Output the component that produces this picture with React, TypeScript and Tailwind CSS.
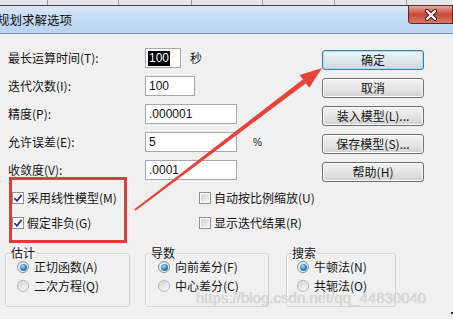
import React from "react";

const K = ({ c }: { c: string }) => <>({c})</>;

function Input({ w, children, selected }: { w: string; children: React.ReactNode; selected?: boolean }) {
  return (
    <div
      className={`${w} flex h-[20px] items-center border border-[#a5a8ae] bg-white pl-[2px] font-['Liberation_Sans',sans-serif] text-[12px] text-[#111]`}
    >
      {selected ? <span className="bg-black px-[1px] leading-[15px] text-white">{children}</span> : <span className="pl-[1px]">{children}</span>}
    </div>
  );
}

function Btn({ children, def }: { children: React.ReactNode; def?: boolean }) {
  return (
    <div
      className={
        def
          ? "flex h-[20px] w-[102px] items-center justify-center rounded-[3px] border border-[#3d7bad] bg-linear-to-b from-[#eef6fb] via-[#e0e8ee] to-[#cfd8de] text-[12px] shadow-[inset_0_0_0_1px_#a6dcf3]"
          : "flex h-[20px] w-[102px] items-center justify-center rounded-[3px] border border-[#707070] bg-linear-to-b from-[#f3f3f3] via-[#e6e6e6] to-[#d2d2d2] text-[12px] shadow-[inset_0_0_0_1px_#fbfbfb]"
      }
    >
      {children}
    </div>
  );
}

function Check({ checked, children }: { checked?: boolean; children: React.ReactNode }) {
  return (
    <div className="flex h-[16px] items-center">
      <span className="flex h-[12px] w-[12px] items-center justify-center border border-[#8e8f8f] bg-white">
        {checked ? (
          <svg width="10" height="10" viewBox="0 0 10 10">
            <path d="M1.5 5.2 L4 7.8 L8.6 1.8" fill="none" stroke="#2b3f86" strokeWidth="1.9" />
          </svg>
        ) : (
          <span className="h-[8px] w-[8px] bg-linear-to-br from-[#cfcfcf] to-[#f4f4f4]" />
        )}
      </span>
      <span className="ml-[3px] text-[12px] leading-[14px]">{children}</span>
    </div>
  );
}

function Radio({ on, children }: { on?: boolean; children: React.ReactNode }) {
  return (
    <div className="flex h-[16px] items-center">
      {on ? (
        <span className="flex h-[12px] w-[12px] items-center justify-center rounded-full border border-[#8a9099] bg-linear-to-b from-[#dfe3e8] to-[#fafafa]">
          <span className="h-[7px] w-[7px] rounded-full bg-[radial-gradient(circle_at_40%_35%,#a6dcf7,#2a7bbd_55%,#174f86)]" />
        </span>
      ) : (
        <span className="h-[12px] w-[12px] rounded-full border border-[#b4b8bd] bg-linear-to-br from-[#d6d6d6] to-[#fbfbfb]" />
      )}
      <span className="ml-[5px] text-[12px] leading-[14px]">{children}</span>
    </div>
  );
}

function Group({ title, w, pl, children }: { title: string; w: string; pl: string; children: React.ReactNode }) {
  return (
    <fieldset className={`${w} rounded-[3px] border border-[#d3d6d9] p-0 pb-[12px] shadow-[inset_1px_1px_0_#fcfcfc]`}>
      <legend className="ml-[5px] p-0 text-[12px] leading-[12px]">{title}</legend>
      <div className={`${pl} flex flex-col gap-[3px]`}>{children}</div>
    </fieldset>
  );
}

export default function App() {
  return (
    <div className="relative h-[319px] w-[453px] overflow-hidden bg-[#f0f0f0] font-['Noto_Sans_CJK_SC','Liberation_Sans',sans-serif] text-[12px] text-[#141414]">
      {/* strip of window behind */}
      <div className="flex h-[6px] border-b border-[#3c3c3c] bg-[#e6e6e6]">
        <div className="w-[48px] border-r border-[#9a9a9a]" />
        <div className="w-[71px] border-r border-[#9a9a9a]" />
        <div className="w-[73px] border-r border-[#9a9a9a]" />
        <div className="w-[71px] border-r border-[#9a9a9a]" />
        <div className="w-[72px] border-r border-[#9a9a9a]" />
        <div className="w-[72px] border-r border-[#9a9a9a]" />
        <div className="flex-1" />
      </div>
      {/* title bar */}
      <div className="flex h-[28px] items-start justify-between border-b border-[#7f93ab] bg-linear-to-b from-[#d9e8f8] via-[#c3dbf4] to-[#b9d3f0]">
        <span className="ml-[-3px] self-center text-[12.5px] leading-[14px] text-[#111]">规划求解选项</span>
        <div className="flex h-[18px] w-[45px] items-center justify-center rounded-bl-[4px] border border-t-0 border-[#6e2219] bg-linear-to-b from-[#e7a597] via-[#c8463a] to-[#d67a68]">
          <svg width="14" height="12" viewBox="0 0 14 12">
            <path d="M3 2 L11 10 M11 2 L3 10" stroke="#4a1510" strokeWidth="4.2" strokeLinecap="round" />
            <path d="M3 2 L11 10 M11 2 L3 10" stroke="#ffffff" strokeWidth="2.3" strokeLinecap="round" />
          </svg>
        </div>
      </div>

      {/* body */}
      <div className="pl-[8px]">
        <div className="flex pt-[14px]">
          <div className="flex w-[314px] flex-col gap-[8px]">
            <div className="flex h-[20px] items-center">
              <span className="w-[137px]">
                最长运算时间<K c="T" />:
              </span>
              <Input w="w-[36px]" selected>
                100
              </Input>
              <span className="ml-[9px]">秒</span>
            </div>
            <div className="flex h-[20px] items-center">
              <span className="w-[137px]">
                迭代次数<K c="I" />:
              </span>
              <Input w="w-[50px]">100</Input>
            </div>
            <div className="flex h-[20px] items-center">
              <span className="w-[137px]">
                精度<K c="P" />:
              </span>
              <Input w="w-[92px]">.000001</Input>
            </div>
            <div className="flex h-[20px] items-center">
              <span className="w-[137px]">
                允许误差<K c="E" />:
              </span>
              <Input w="w-[92px]">5</Input>
              <span className="ml-[16px] font-['Liberation_Sans',sans-serif] text-[10px]">%</span>
            </div>
            <div className="flex h-[20px] items-center">
              <span className="w-[137px]">
                收敛度<K c="V" />:
              </span>
              <Input w="w-[92px]">.0001</Input>
            </div>
          </div>
          <div className="flex flex-col gap-[8px] pt-[2px]">
            <Btn def>确定</Btn>
            <Btn>取消</Btn>
            <Btn>
              装入模型<K c="L" />...
            </Btn>
            <Btn>
              保存模型<K c="S" />...
            </Btn>
            <Btn>
              帮助<K c="H" />
            </Btn>
          </div>
        </div>

        {/* checkboxes */}
        <div className="mt-[8px] flex">
          <div className="flex w-[191px] flex-col gap-[9px] pl-[4px]">
            <Check checked>
              采用线性模型<K c="M" />
            </Check>
            <Check checked>
              假定非负<K c="G" />
            </Check>
          </div>
          <div className="flex flex-col gap-[9px]">
            <Check>
              自动按比例缩放<K c="U" />
            </Check>
            <Check>
              显示迭代结果<K c="R" />
            </Check>
          </div>
        </div>

        {/* groups */}
        <div className="ml-[-3px] mt-[16px] flex">
          <Group title="估计" w="w-[125px]" pl="pl-[11px]">
            <Radio on>
              正切函数<K c="A" />
            </Radio>
            <Radio>
              二次方程<K c="Q" />
            </Radio>
          </Group>
          <div className="w-[15px]" />
          <Group title="导数" w="w-[124px]" pl="pl-[12px]">
            <Radio on>
              向前差分<K c="F" />
            </Radio>
            <Radio>
              中心差分<K c="C" />
            </Radio>
          </Group>
          <div className="w-[17px]" />
          <Group title="搜索" w="w-[110px]" pl="pl-[10px]">
            <Radio on>
              牛顿法<K c="N" />
            </Radio>
            <Radio>
              共轭法<K c="O" />
            </Radio>
          </Group>
        </div>
      </div>

      {/* watermark */}
      <div className="pointer-events-none absolute left-[196px] top-[289px] font-['Liberation_Sans',sans-serif] text-[15px] leading-[18px] text-[#dadada] [text-shadow:0_0_1px_#c4c4c4]">
        https://blog.csdn.net/qq_44830040
      </div>
      <div className="absolute left-[451px] top-[312px] h-[2px] w-[2px] bg-[#333]" />

      {/* red annotation rectangle */}
      <div className="pointer-events-none absolute left-[9px] top-[177px] h-[66px] w-[118px] border-[3px] border-[#d8403a]" />

      {/* red arrow */}
      <svg className="pointer-events-none absolute left-0 top-0" width="453" height="319" viewBox="0 0 453 319">
        <polygon points="134.4,209.2 303,79.3 306,83.3 135.6,210.8" fill="#e5433c" />
        <polygon points="322,68 299.7,74.9 309.3,87.7" fill="#e5433c" />
      </svg>
    </div>
  );
}
